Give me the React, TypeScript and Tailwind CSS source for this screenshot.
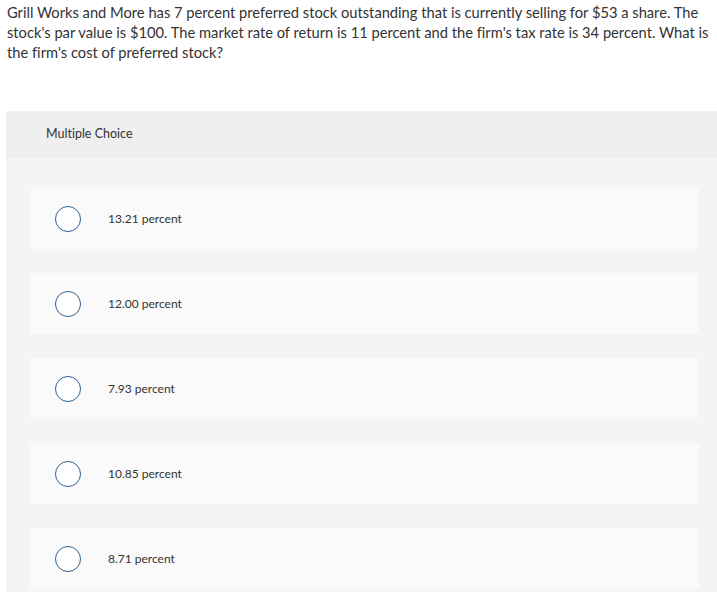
import React from "react";

const options = ["13.21 percent", "12.00 percent", "7.93 percent", "10.85 percent", "8.71 percent"];

export default function App() {
  return (
    <div className="w-[717px] h-[592px] overflow-hidden bg-white [font-variant-ligatures:none]" style={{ fontFamily: "Lato, 'Open Sans', sans-serif" }}>
      <p className="pl-[7px] pr-[2px] pt-[2px] h-[62px] text-[14.7px] leading-[20px] text-[#333333]">
        Grill Works and More has 7 percent preferred stock outstanding that is currently selling for $53 a share. The stock's par value is $100. The market rate of return is 11 percent and the firm's tax rate is 34 percent. What is the firm's cost of preferred stock?
      </p>
      <div className="ml-[6px] mt-[49px] bg-[#f4f4f4]">
        <div className="h-[47px] bg-[#efefef] flex items-center pl-[40px] text-[12.5px] text-[#333333]">
          Multiple Choice
        </div>
        <div className="flex flex-col gap-[24px] pt-[30px] pl-[24px] pr-[18px] pb-[10px]">
          {options.map((o) => (
            <div key={o} className="h-[61px] rounded-[4px] bg-[#fafafa] flex items-center pl-[25px]">
              <span className="w-[26px] h-[26px] rounded-full border-[1.5px] border-[#2f5f8f] bg-white shrink-0" />
              <span className="ml-[27px] text-[12px] text-[#333333]">{o}</span>
            </div>
          ))}
        </div>
      </div>
    </div>
  );
}
